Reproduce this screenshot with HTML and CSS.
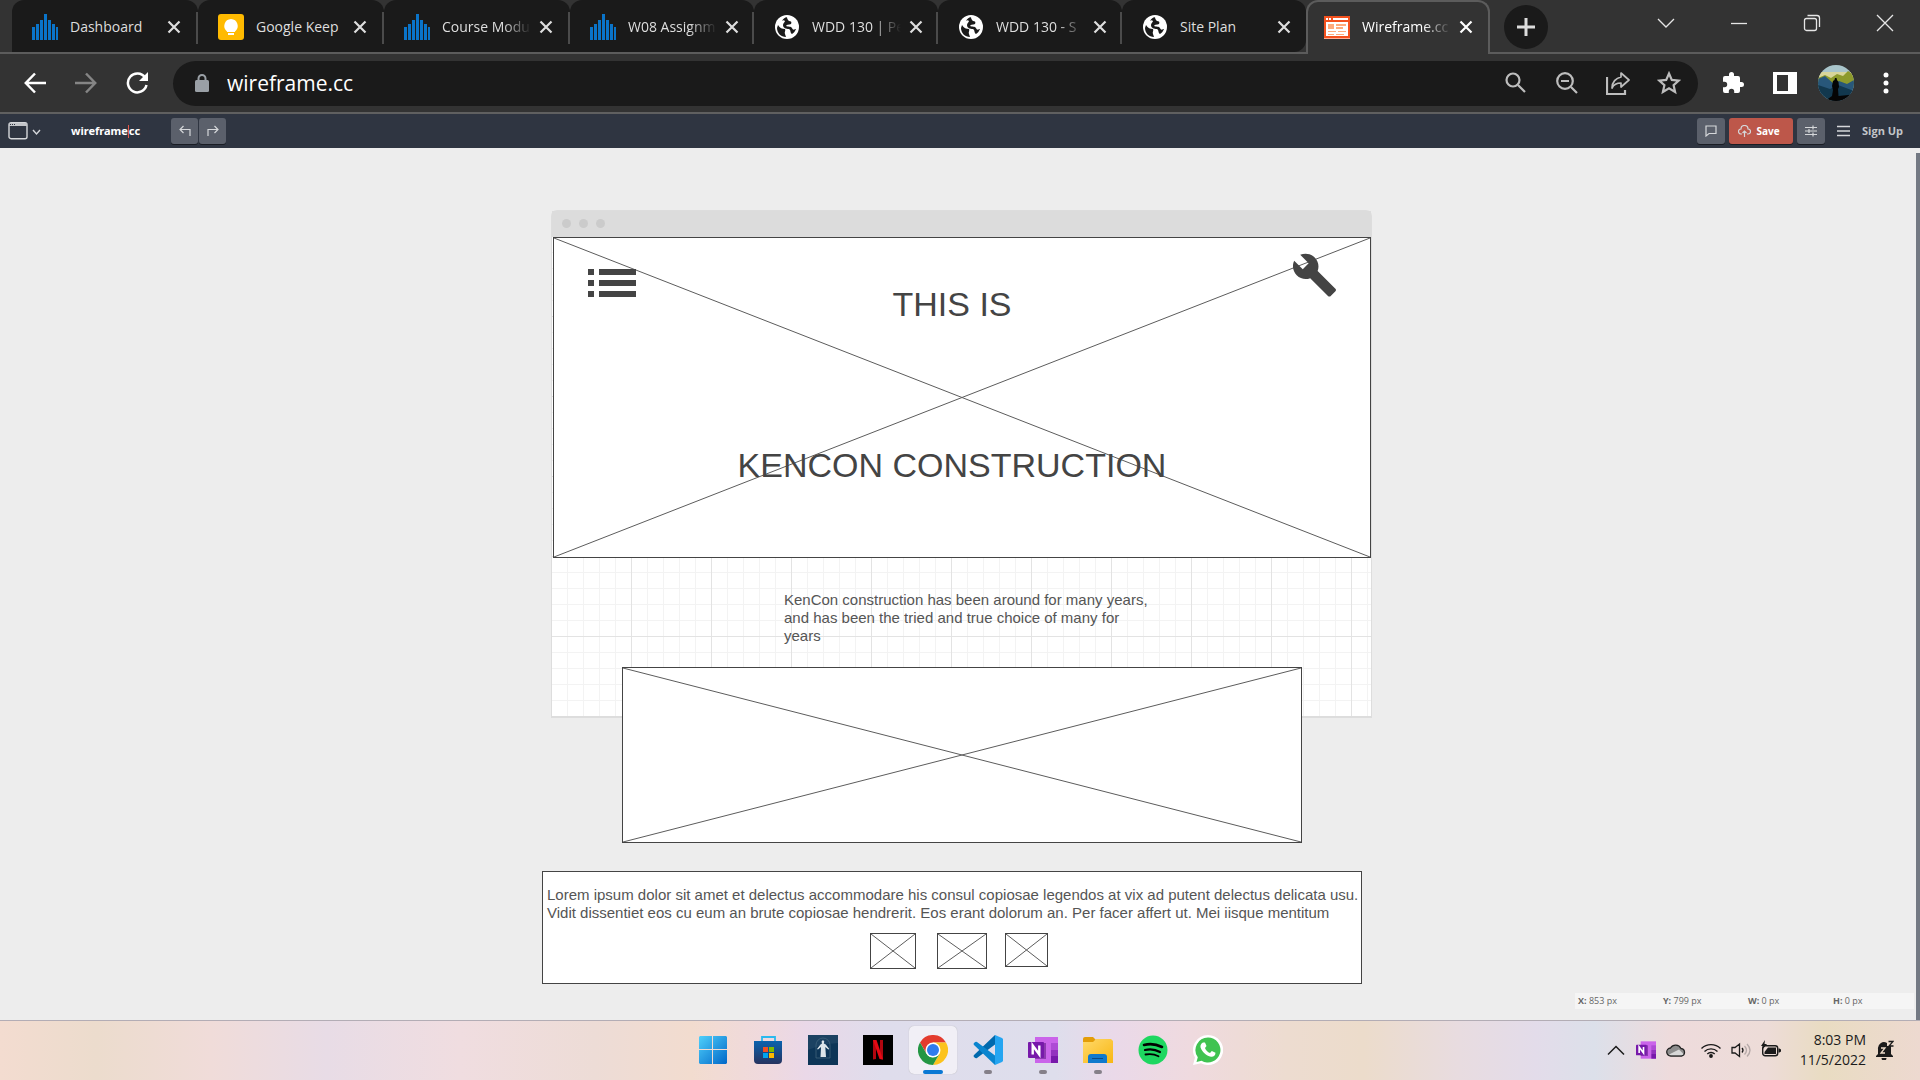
FILE: index.html
```html
<!DOCTYPE html>
<html lang="en">
<head>
<meta charset="utf-8">
<title>Wireframe.cc</title>
<link rel="stylesheet" href="styles.css">
</head>
<body>
<svg class="defs" width="0" height="0" aria-hidden="true">
  <symbol id="bars" viewBox="0 0 26 26"><path fill="#0a74c9" d="M0 13h3v13H0zM4 10h3v16H4zM8 6h3v20H8zM12 0h3v26h-3zM16 6h3v20h-3zM20 10h3v16h-3zM24 13h2v13h-2z"/></symbol>
  <symbol id="globe" viewBox="0 0 26 26"><circle cx="13" cy="13" r="12" fill="#fff"/><path fill="#1a1a1a" d="M4 11c2 3 4 4 7 4 1 2-1 3 0 5l1 3c-5 0-9-4-9-9zM12 3c2 1 1 3 3 4 2 0 3 1 2 3-2 1-4 0-5 2 2 1 5 0 6 2 1 3 3 1 4 1-1 2-2 4-4 5-2-1-1-4-3-5-3 0-6-1-6-4 0-2 2-3 2-4-1-1-2-1-3 0 1-2 3-4 6-4z"/></symbol>
  <symbol id="cross" viewBox="0 0 14 14"><path d="M1.500 1.500l11 11M12.500 1.500l-11 11" fill="none" stroke="currentColor" stroke-width="2.200"/></symbol>
  <symbol id="onenote" viewBox="0 0 30 30"><path fill="#ca64ea" d="M7 2h23v26H7z"/><path fill="#ae4bd5" d="M23 8h7v7h-7z"/><path fill="#9332bf" d="M23 15h7v6h-7z"/><path fill="#7719aa" d="M23 21h7v7h-7z"/><path fill="#501075" opacity=".5" d="M7 8h11v16H7z"/><rect y="7" width="16" height="16" rx="1" fill="#7719aa"/><path fill="none" stroke="#fff" stroke-width="2.400" d="M4.700 19.500v-9l6.600 9v-9"/></symbol>
</svg>

<header class="browser">
  <div class="strip">
    <nav class="tabs" aria-label="Tabs">
      <div class="tab wide"><svg class="fav"><use href="#bars"/></svg><a href="#" class="title">Dashboard</a><button class="close" aria-label="Close tab"><svg><use href="#cross"/></svg></button></div>
      <div class="tab wide"><svg class="fav" viewBox="0 0 26 26"><rect width="26" height="26" rx="3" fill="#ffba00"/><path fill="#fff" d="M13 5a7 7 0 0 1 4 12.500V18H9v-.500A7 7 0 0 1 13 5zM10 19h6v2h-6z"/></svg><a href="#" class="title">Google Keep</a><button class="close" aria-label="Close tab"><svg><use href="#cross"/></svg></button></div>
      <div class="tab wide"><svg class="fav"><use href="#bars"/></svg><a href="#" class="title fade">Course Modu</a><button class="close" aria-label="Close tab"><svg><use href="#cross"/></svg></button></div>
      <div class="tab"><svg class="fav"><use href="#bars"/></svg><a href="#" class="title fade">W08 Assignm</a><button class="close" aria-label="Close tab"><svg><use href="#cross"/></svg></button></div>
      <div class="tab"><svg class="fav"><use href="#globe"/></svg><a href="#" class="title fade">WDD 130 | Pe</a><button class="close" aria-label="Close tab"><svg><use href="#cross"/></svg></button></div>
      <div class="tab"><svg class="fav"><use href="#globe"/></svg><a href="#" class="title fade">WDD 130 - S</a><button class="close" aria-label="Close tab"><svg><use href="#cross"/></svg></button></div>
      <div class="tab"><svg class="fav"><use href="#globe"/></svg><a href="#" class="title">Site Plan</a><button class="close" aria-label="Close tab"><svg><use href="#cross"/></svg></button></div>
      <div class="tab active"><svg class="fav" viewBox="0 0 26 26"><path fill="#f4511e" d="M0 2h26v22H0z"/><path fill="#ffab91" d="M0 24h26v1H0z"/><path fill="#fff" d="M2 4h2v2H2zM5 4h2v2H5zM9 4h15v2H9zM2 8h22v14H2z"/><path fill="#ffab7c" d="M4 10h6v5H4zM12 10h10v2H12zM12 13h7v2h-7zM4 17h8v1H4zM14 17h8v1h-8zM4 20h6v1H4zM12 20h8v1h-8z"/></svg><a href="#" class="title fade">Wireframe.cc</a><button class="close" aria-label="Close tab"><svg><use href="#cross"/></svg></button></div>
    </nav>
    <button class="newtab" aria-label="New tab"><svg width="18" height="18" viewBox="0 0 18 18"><path d="M9 0v18M0 9h18" stroke="#dcdcdc" stroke-width="3"/></svg></button>
    <div class="winctl">
      <button aria-label="Search tabs"><svg width="18" height="18" viewBox="0 0 18 18"><path d="M1 5l8 8 8-8"/></svg></button>
      <button aria-label="Minimize"><svg width="18" height="18" viewBox="0 0 18 18"><path d="M1 9.500h16"/></svg></button>
      <button aria-label="Restore"><svg width="18" height="18" viewBox="0 0 18 18"><rect x="1.500" y="4.500" width="12" height="12" rx="2"/><path d="M4.500 1.500H14a2.500 2.500 0 0 1 2.500 2.500v9"/></svg></button>
      <button aria-label="Close"><svg width="18" height="18" viewBox="0 0 18 18"><path d="M1 1l16 16M17 1L1 17"/></svg></button>
    </div>
  </div>
  <div class="toolbar">
    <div class="navs">
      <button aria-label="Back"><svg width="22" height="22" viewBox="0 0 22 22" fill="none" stroke="#fff" stroke-width="2.500"><path d="M22 11H2M11 1.500L1.800 11l9.200 9.500"/></svg></button>
      <button aria-label="Forward"><svg width="22" height="22" viewBox="0 0 22 22" fill="none" stroke="#858585" stroke-width="2.500"><path d="M0 11h20M11 1.500l9.200 9.500-9.200 9.500"/></svg></button>
      <button aria-label="Reload"><svg width="22" height="22" viewBox="0 0 22 22" fill="none" stroke="#fff" stroke-width="2.500"><path d="M19 5.500A9.400 9.400 0 1 0 20.500 13"/><path fill="#fff" stroke="none" d="M22 0v9h-9z"/></svg></button>
    </div>
    <div class="omnibox">
      <svg width="14" height="18" viewBox="0 0 14 18"><rect y="6" width="14" height="12" rx="1.500" fill="#9aa0a6"/><path d="M3.500 7V4.500a3.500 3.500 0 0 1 7 0V7" fill="none" stroke="#9aa0a6" stroke-width="2"/></svg>
      <input type="text" value="wireframe.cc" aria-label="Address">
      <button aria-label="Search page"><svg width="24" height="24" viewBox="0 0 24 24"><circle cx="9" cy="9" r="6.500"/><path d="M14 14l7 7"/></svg></button>
      <button aria-label="Zoom"><svg width="24" height="24" viewBox="0 0 24 24"><circle cx="10" cy="10" r="7.800"/><path d="M16 16l6 6M6 10h8"/></svg></button>
      <button aria-label="Share"><svg width="24" height="24" viewBox="0 0 24 24"><path d="M1 6v17h18v-4" /><path stroke-width="1.700" stroke-linejoin="round" d="M15 2l8 7-8 7v-4c-4 0-7 1-9 5 0-6 4-10 9-11z"/></svg></button>
      <button aria-label="Bookmark"><svg width="24" height="24" viewBox="0 0 24 24"><path d="M12 2.500l2.800 6.400 7 .700-5.200 4.600 1.500 6.800-6.100-3.600L5.900 21l1.500-6.800-5.200-4.600 7-.700z"/></svg></button>
    </div>
    <div class="exts">
      <button aria-label="Extensions"><svg width="24" height="24" viewBox="0 0 24 24" fill="#fff"><path d="M20.500 11H19V7a2 2 0 0 0-2-2h-4V3.500a2.500 2.500 0 0 0-5 0V5H4a2 2 0 0 0-2 2v3.800h1.500a2.700 2.700 0 0 1 0 5.400H2V20a2 2 0 0 0 2 2h3.800v-1.500a2.700 2.700 0 0 1 5.400 0V22H17a2 2 0 0 0 2-2v-4h1.500a2.500 2.500 0 0 0 0-5z"/></svg></button>
      <button aria-label="Side panel"><svg width="24" height="24" viewBox="0 0 24 24"><path fill="#fff" fill-rule="evenodd" d="M0 1h24v22H0zM4 4v16h11V4z"/></svg></button>
      <button aria-label="Profile"><svg width="36" height="36" viewBox="0 0 36 36"><defs><clipPath id="av"><circle cx="18" cy="18" r="18"/></clipPath></defs><g clip-path="url(#av)"><path fill="#a9c5cb" d="M0 0h36v36H0z"/><path fill="#d8d59a" d="M0 7h36v6H0z"/><path fill="#8d9a2c" d="M0 13l7-3 6 3 6-4 6 2 5-5 6 4v12H0z"/><path fill="#28577a" d="M0 14l7-3 9 8 5-3 8 3 7-4v14H0z"/><path fill="#12384e" d="M0 20l12 4 8-4 16 6v10H0z"/><path fill="#050505" d="M7 36l7-5 1-6-1-4 1-5 1.500-1 .500-2h1.500l.500 2 1.500 2 .500 5-1 2 .500 7 10-1 5-2v8z"/></g></svg></button>
      <button aria-label="Menu"><svg width="6" height="22" viewBox="0 0 6 22" fill="#fff"><circle cx="3" cy="3" r="2.500"/><circle cx="3" cy="11" r="2.500"/><circle cx="3" cy="19" r="2.500"/></svg></button>
    </div>
  </div>
</header>

<div class="appbar">
  <button class="device" aria-label="Template"><svg width="34" height="18" viewBox="0 0 34 18" fill="none" stroke="#c3c5c9"><rect x="1" y=".700" width="18" height="16" rx="2" stroke-width="1.400"/><path fill="#c3c5c9" stroke="none" d="M1 1h18v3H1z"/><path stroke="#2f3541" stroke-dasharray="1 1" d="M2 2.500h5"/><path stroke-width="1.400" d="M25 8l3.500 4L32 8"/></svg></button>
  <a href="#" class="brand">wireframe<i></i>cc</a>
  <div class="history">
    <button aria-label="Undo"><svg width="12" height="12" viewBox="0 0 12 12"><path d="M4.500 1L1 4.500 4.500 8M1 4.500h10V11"/></svg></button>
    <button aria-label="Redo"><svg width="12" height="12" viewBox="0 0 12 12"><path d="M7.500 1L11 4.500 7.500 8M11 4.500H1V11"/></svg></button>
  </div>
  <div class="actions">
    <button aria-label="Comments"><svg width="12" height="12" viewBox="0 0 12 12"><path d="M1 1h10v7.500H4L1 11z"/></svg></button>
    <button class="save"><svg width="13" height="12" viewBox="0 0 13 12"><path d="M4 9H3a2.500 2.500 0 0 1 0-5 3.500 3.500 0 0 1 7 0 2.500 2.500 0 0 1 0 5H9M6.500 12V6M4.500 8l2-2 2 2"/></svg>Save</button>
    <button aria-label="Settings"><svg width="12" height="12" viewBox="0 0 12 12"><path d="M0 2.500h12M0 6h12M0 9.500h12M8 .500v4M4 4v4M8 7.500v4"/></svg></button>
    <button class="burger" aria-label="Menu"><svg width="13" height="12" viewBox="0 0 13 12"><path d="M0 1.500h13M0 6h13M0 10.500h13" stroke-width="1.600"/></svg></button>
    <a href="#" class="signup">Sign Up</a>
  </div>
</div>

<main class="workspace">
  <div class="stage">
    <div class="frame">
      <div class="framebar"><i></i><i></i><i></i></div>
      <div class="grid"></div>
    </div>
    <div class="node hero"><svg><line x1="0" y1="0" x2="100%" y2="100%"/><line x1="0" y1="100%" x2="100%" y2="0"/></svg></div>
    <svg class="node listicon" viewBox="0 0 48 28" fill="#444"><path d="M0 0h6v6H0zM11 0h37v6H11zM0 11h6v6H0zM11 11h37v6H11zM0 22h6v6H0zM11 22h37v6H11z"/></svg>
    <svg class="node wrench" viewBox="1 1 22 22"><path fill="#444" d="M22.700 19l-9.100-9.100c.900-2.300.400-5-1.500-6.900-2-2-5-2.400-7.400-1.300L9 6 6 9 1.600 4.700C.400 7.100.900 10.100 2.900 12.100c1.900 1.900 4.600 2.400 6.900 1.500l9.100 9.100c.400.400 1 .400 1.400 0l2.300-2.300c.500-.400.500-1.100.100-1.400z"/></svg>
    <h1 class="node head one">THIS IS</h1>
    <h1 class="node head two">KENCON CONSTRUCTION</h1>
    <p class="node copy intro">KenCon construction has been around for many years, and has been the tried and true choice of many for years</p>
    <div class="node banner"><svg><line x1="0" y1="0" x2="100%" y2="100%"/><line x1="0" y1="100%" x2="100%" y2="0"/></svg></div>
    <div class="node footer">
      <p class="copy">Lorem ipsum dolor sit amet et delectus accommodare his consul copiosae legendos at vix ad putent delectus delicata usu.<br>Vidit dissentiet eos cu eum an brute copiosae hendrerit. Eos erant dolorum an. Per facer affert ut. Mei iisque mentitum</p>
    </div>
    <div class="node thumb t1"><svg><line x1="0" y1="0" x2="100%" y2="100%"/><line x1="0" y1="100%" x2="100%" y2="0"/></svg></div>
    <div class="node thumb t2"><svg><line x1="0" y1="0" x2="100%" y2="100%"/><line x1="0" y1="100%" x2="100%" y2="0"/></svg></div>
    <div class="node thumb t3"><svg><line x1="0" y1="0" x2="100%" y2="100%"/><line x1="0" y1="100%" x2="100%" y2="0"/></svg></div>
  </div>
  <div class="coords"><span><b>X:</b> 853 px</span><span><b>Y:</b> 799 px</span><span><b>W:</b> 0 px</span><span><b>H:</b> 0 px</span></div>
  <div class="scroll"></div>
</main>

<footer class="taskbar">
  <div class="apps">
    <button aria-label="Start"><svg viewBox="0 0 30 30"><defs><linearGradient id="w" x1="0" y1="0" x2="1" y2="1"><stop stop-color="#4fd0fb"/><stop offset="1" stop-color="#0067c8"/></linearGradient></defs><path fill="url(#w)" d="M2 1h12v13H1V2zM15 1h13l1 1v12H15zM1 15h13v14H2l-1-1zM15 15h14v13l-1 1H15z"/></svg></button>
    <button aria-label="Store"><svg viewBox="0 0 30 30"><defs><linearGradient id="st" x1="0" y1="0" x2="0" y2="1"><stop stop-color="#0a62ae"/><stop offset="1" stop-color="#26335f"/></linearGradient></defs><path fill="none" stroke="#2bb9ee" stroke-width="1.800" d="M9 7V2h13v5"/><path fill="url(#st)" d="M1 6h28v19a4 4 0 0 1-4 4H5a4 4 0 0 1-4-4z"/><path fill="#f25022" d="M10 12h5v5h-5z"/><path fill="#7fba00" d="M16 12h5v5h-5z"/><path fill="#00a4ef" d="M10 18h5v5h-5z"/><path fill="#ffb900" d="M16 18h5v5h-5z"/></svg></button>
    <button aria-label="Library"><svg viewBox="0 0 30 30"><path fill="#0d3557" d="M0 0h30v30H0z"/><path fill="#1c4262" d="M0 0h30v8Q14 9 0 15z"/><path fill="none" stroke="#45677f" stroke-width=".700" d="M8 23V10a7 7 0 0 1 14 0v13z"/><path fill="#dde5ea" d="M15 5l1.300 1.500-.500 2 2 1 3.500 4.500-1 .500-3-2.500.700 10h-5.500l.500-10-3 2.500-1-.500 3.500-4.500 1.500-1-.500-2z"/></svg></button>
    <button aria-label="Netflix"><svg viewBox="0 0 30 30"><path d="M0 0h30v30H0z"/><path fill="#b1060f" d="M10 5h3v19l-3 .500zM17 5h3v19.500l-3-.500z"/><path fill="#e50914" d="M10 5h3.500L20 24.500l-3.500-.500z"/></svg></button>
    <button class="current" aria-label="Chrome"><svg viewBox="0 0 30 30"><path fill="#e33b2e" d="M2 7.500a15 15 0 0 1 26 0H15l-6.500 11z"/><path fill="#fcc31d" d="M28 7.500A15 15 0 0 1 15 30l6.500-11.300L15 7.500z"/><path fill="#249644" d="M2 7.500L8.500 18.700c3 4.500 8 5 13 0L15 30A15 15 0 0 1 2 7.500z"/><circle cx="15" cy="15" r="7.500" fill="#fff"/><circle cx="15" cy="15" r="6" fill="#2f7bee"/></svg></button>
    <button class="open" aria-label="VS Code"><svg viewBox="0 0 30 30"><path fill="#0069ad" d="M1 20l21-20 2 8L4 23q-1 1-3-1-1-1 0-2z"/><path fill="#0a85cf" d="M1 10l21 20 2-8L4 7q-1-1-3 1-1 1 0 2z"/><path fill="#25a5f1" d="M22 0l7 3 1 1v22l-1 1-7 3z"/></svg></button>
    <button class="open" aria-label="OneNote"><svg><use href="#onenote"/></svg></button>
    <button class="open" aria-label="Explorer"><svg viewBox="0 0 30 30"><defs><linearGradient id="fo" x1="0" y1="0" x2="1" y2="1"><stop stop-color="#ffd96a"/><stop offset="1" stop-color="#f8b714"/></linearGradient></defs><path fill="#e39d08" d="M0 4a2 2 0 0 1 2-2h8l3 3-2 3H0z"/><path fill="url(#fo)" d="M0 7h10l3-3h15l2 2v22H0z"/><path fill="#0f79cd" d="M5 28v-6a3 3 0 0 1 3-3h13a3 3 0 0 1 3 3v6z"/><path stroke="#0b4a85" d="M9 23.500h11"/></svg></button>
    <button aria-label="Spotify"><svg viewBox="0 0 30 30"><circle cx="15" cy="15" r="14.500" fill="#1ed760"/><path fill="none" stroke="#000" stroke-linecap="round" stroke-width="2.600" d="M6 10q9-2.500 18 2"/><path fill="none" stroke="#000" stroke-linecap="round" stroke-width="2.200" d="M7 15q8-2 15 2"/><path fill="none" stroke="#000" stroke-linecap="round" stroke-width="1.800" d="M7.500 19.500q7-1.500 13 1.800"/></svg></button>
    <button aria-label="WhatsApp"><svg viewBox="0 0 30 30"><path fill="#fff" d="M15 0a15 15 0 1 1-7 28.200L0 30l2-7.500A15 15 0 0 1 15 0z"/><path fill="#40c351" d="M15 2.500a12.500 12.500 0 1 1-6.500 23.200L3.500 27l1.300-4.800A12.500 12.500 0 0 1 15 2.500z"/><path fill="#fff" d="M10 7.500h2l1.500 3.500-1.500 2c1 2.500 2.500 4 5 5l1.800-2 3.700 1.800c0 3-2 4.200-4.500 4-5-1-9-5-10.500-9.500-.300-2 .700-4 2.500-4.800z"/></svg></button>
  </div>
  <div class="tray">
    <svg width="20" height="20" viewBox="0 0 20 20" fill="none" stroke="#1b1b1b" stroke-width="1.500"><path d="M2 14.500l8-8 8 8"/></svg>
    <svg width="20" height="20"><use href="#onenote"/></svg>
    <svg width="20" height="20" viewBox="0 0 20 20"><path fill="#8d8d8d" stroke="#222" stroke-width="1.300" d="M5 16a4 4 0 0 1-.500-8A6 6 0 0 1 15 8.500 3.800 3.800 0 0 1 15.500 16z"/><path fill="#d8d8d8" d="M3 14.500l10-5 4.500 4.500q-1 1.300-2 1.300H5q-1 0-2-.800z"/></svg>
    <svg class="wifi" width="20" height="20" viewBox="0 0 20 20" fill="none" stroke="#1b1b1b" stroke-width="1.400"><path d="M.500 8.500a13.500 13.500 0 0 1 19 0M3.500 11.500a9.300 9.300 0 0 1 13 0M6.300 14a5.300 5.300 0 0 1 7.400 0"/><circle cx="10" cy="16" r="1.200" fill="#1b1b1b"/></svg>
    <svg width="20" height="20" viewBox="0 0 20 20" fill="none" stroke="#1b1b1b" stroke-width="1.300"><path d="M1 7.500h3L8.500 4v12.500L4 13H1zM11 8q2 2.300 0 4.500"/><path stroke="#b5a9a8" d="M13.500 6q4 4.200 0 8.500M16 4q6 6.200 0 12.500"/></svg>
    <svg width="20" height="20" viewBox="0 0 20 20"><rect x="1.700" y="5.700" width="15" height="10" rx="2.500" fill="none" stroke="#1b1b1b" stroke-width="1.400"/><path fill="#1b1b1b" d="M7 7.500h8v6.500H3.500V12zM17.500 8.500h1l1.500 1v2l-1.500 1h-1zM4 0L0 6h2.500L1 10l5-6H3.500z"/></svg>
    <div class="clock"><span>8:03 PM</span><span>11/5/2022</span></div>
    <svg width="18" height="20" viewBox="0 0 18 20"><path fill="#1b1b1b" d="M2 9a6 6 0 0 1 9-6v3h4v8l2 2v1H0v-1l2-2zM5.500 18h5a2.500 2.500 0 0 1-5 0z"/><path fill="none" stroke="#eddcca" stroke-width="1.300" d="M5 8h4l-4 5h4"/><path fill="none" stroke="#1b1b1b" stroke-width="1.300" d="M12.500 1.500H17L13 6h4.500"/></svg>
  </div>
</footer>
</body>
</html>
```

FILE: styles.css
```css
* { box-sizing: border-box; }
body {
  margin: 0;
  min-height: 100vh;
  display: flex;
  flex-direction: column;
  background: #ededed;
  font-family: "Open Sans", "Noto Sans", sans-serif;
  font-size: 14px;
}
button {
  border: 0;
  padding: 0;
  background: none;
  font: inherit;
  color: inherit;
  display: flex;
  align-items: center;
  justify-content: center;
}
a { color: inherit; text-decoration: none; }
.defs { position: absolute; }

/* Browser chrome */
.browser { background: #333; color: #dedede; border-bottom: 2px solid #606060; }
.strip { display: flex; height: 54px; padding-left: 12px; box-shadow: inset 0 -2px #5c5c5c; }
.tabs { display: flex; flex: 0 1 1478px; min-width: 0; }
.tab {
  flex: 0 1 184px;
  min-width: 0;
  height: 52px;
  display: flex;
  align-items: center;
  padding: 2px 15px 0 20px;
  background: linear-gradient(#4b4b4b, #4b4b4b) right 12px / 2px 32px no-repeat #1a1a1a;
  border-radius: 12px 12px 0 0;
}
.tab.wide { flex-basis: 186px; padding-right: 17px; }
.tab:nth-child(7) { background-image: none; border-bottom-right-radius: 12px; }
.tab.active {
  height: 54px;
  background: #333;
  border: 2px solid #5c5c5c;
  border-bottom: 0;
  padding: 0 15px 2px 16px;
  color: #fff;
}
.fav { width: 26px; height: 26px; flex: none; }
.title {
  flex: 1;
  min-width: 0;
  margin: 0 8px 0 12px;
  white-space: nowrap;
  line-height: 20px;
}
.fade { mask-image: linear-gradient(to left, transparent, #000 28px); }
.close, .close svg { width: 14px; height: 14px; flex: none; }
.newtab { width: 44px; height: 44px; margin: 5px 0 0 14px; border-radius: 50%; background: #1a1a1a; flex: none; }
.winctl { margin-left: auto; display: flex; gap: 55px; padding: 0 26px 8px 0; }
.winctl svg { fill: none; stroke: #e6e6e6; stroke-width: 1.3; }
.toolbar { display: flex; align-items: center; height: 58px; padding: 0 31px 0 24px; }
.navs { display: flex; gap: 29px; margin-right: 25px; }
.omnibox {
  flex: 1;
  height: 45px;
  display: flex;
  align-items: center;
  gap: 27px;
  padding: 0 17px 0 22px;
  border-radius: 23px;
  background: #1a1a1a;
}
.omnibox input {
  flex: 1;
  min-width: 0;
  height: 32px;
  padding: 0;
  margin-left: -9px;
  border: 0;
  outline: 0;
  background: none;
  color: #fff;
  font: 21px "Open Sans", "Noto Sans", sans-serif;
}
.omnibox button svg { fill: none; stroke: #bdbdbd; stroke-width: 2.2; }
.exts { display: flex; align-items: center; gap: 28px; margin-left: 23px; }
.exts button:nth-child(3) { margin: 0 -7px; }
.exts button:last-child { margin-left: 8px; }

/* Editor bar */
.appbar { display: flex; align-items: center; height: 34px; padding: 0 17px 0 8px; background: #2f3541; }
.device { width: 34px; }
.brand {
  display: flex;
  align-items: center;
  width: 100px;
  margin-left: 29px;
  color: #fff;
  font: 700 11px/16px "Noto Sans", sans-serif;
}
.brand i { width: 1px; height: 13px; background: #e2574c; }
.history, .actions { display: flex; align-items: center; gap: 1px; }
.history button, .actions button {
  width: 27px;
  height: 26px;
  background: #5b606b;
  border-radius: 3px;
  box-shadow: 0 1px #1a1d24;
}
.appbar svg { fill: none; stroke: #d5d7da; stroke-width: 1.2; }
.actions { margin-left: auto; gap: 4px; color: #c3c5c9; font-weight: 700; font-size: 11px; line-height: 16px; }
.actions button { width: 28px; }
.actions .save { width: 64px; gap: 5px; padding-right: 4px; background: #bd574a; color: #fff; font-size: 10px; }
.actions .burger { width: 13px; margin: 0 8px; background: none; box-shadow: none; }

/* Drawing area */
.workspace { flex: 1 0 auto; position: relative; padding: 62px 0 36px 4px; }
.stage { position: relative; width: 822px; height: 774px; margin: 0 auto; }
.frame { width: 821px; height: 508px; border: 1px solid #ddd; border-bottom: 2px solid #ddd; border-radius: 6px 6px 0 0; background: #fff; }
.framebar { display: flex; align-items: center; gap: 8px; height: 26px; padding: 0 0 2px 10px; background: #dcdcdc; }
.framebar i { width: 9px; height: 9px; border-radius: 50%; background: #cbcbcb; }
.grid {
  height: 479px;
  background:
    linear-gradient(to left, #e3e3e3 1px, transparent 1px) 0 0 / 80px 80px,
    linear-gradient(to top, #e3e3e3 1px, transparent 1px) 0 0 / 80px 80px,
    linear-gradient(to left, #f3f3f3 1px, transparent 1px) 0 0 / 16px 16px,
    linear-gradient(to top, #f3f3f3 1px, transparent 1px) 0 0 / 16px 16px;
}
.node { position: absolute; margin: 0; }
.hero, .banner, .footer, .thumb { background: #fff; border: 1px solid #444; }
.node > svg { display: block; width: 100%; height: 100%; stroke: #5c5c5c; stroke-width: 1; }
.hero { left: 2px; top: 27px; width: 818px; height: 321px; }
.listicon { left: 37px; top: 59px; width: 48px; height: 28px; }
.wrench { left: 742px; top: 43px; width: 43px; height: 44px; }
.head { left: 0; width: 802px; text-align: center; font: 34px/40px "Liberation Sans", Arial, sans-serif; color: #444; }
.one { top: 74px; }
.two { top: 235px; }
.copy { margin: 0; font: 15px/18px "Liberation Sans", Arial, sans-serif; color: #555; }
.intro { left: 233px; top: 381px; width: 366px; }
.banner { left: 71px; top: 457px; width: 680px; height: 176px; }
.footer { left: -9px; top: 661px; width: 820px; height: 113px; padding: 14px 0 14px 4px; }
.footer .copy { white-space: nowrap; }
.thumb { top: 723px; height: 36px; }
.t1 { left: 319px; width: 46px; }
.t2 { left: 386px; width: 50px; }
.t3 { left: 454px; width: 43px; height: 34px; }
.coords {
  position: absolute;
  right: 6px;
  bottom: 11px;
  width: 339px;
  display: grid;
  grid-template-columns: 85px 85px 85px 1fr;
  padding-left: 3px;
  background: #f5f5f5;
  color: #666;
  font-size: 9px;
  line-height: 16px;
}
.scroll { position: absolute; right: 0; top: 5px; bottom: 0; width: 4px; background: #737983; }

/* Taskbar */
.taskbar {
  position: relative;
  display: flex;
  align-items: center;
  justify-content: flex-end;
  height: 60px;
  padding-bottom: 2px;
  border-top: 1px solid #b3adb5;
  background: linear-gradient(90deg, #f3dcd0, #ecdccd 5%, #f0dcd9 11%, #e8dce6 17%, #f0dde0 24%, #eddcd6 31%, #f2dccf 36%, #efd9de 40%, #ead8e8 42%, #dfddec 46%, #dedeec 55%, #ead9e9 58%, #efdadf 62%, #eddcd0 67%, #ecdccb 71%, #e8dce0 76%, #e3dcea 80%, #dce0ea 83%, #eedbdc 87%, #eddcd8 92%, #e9dcc2 95%, #edd9d0);
}
.apps { position: absolute; left: 1px; right: 0; top: 0; bottom: 2px; display: flex; justify-content: center; align-items: center; gap: 7px; pointer-events: none; }
.apps button { position: relative; width: 48px; height: 48px; border-radius: 5px; }
.apps svg { width: 30px; height: 30px; }
.apps .current { background: #f1eff6; box-shadow: 0 0 1px #aaa; }
.apps .current::after, .apps .open::after {
  content: "";
  position: absolute;
  bottom: 0;
  width: 8px;
  height: 4px;
  border-radius: 2px;
  background: #858089;
}
.apps .current::after { width: 20px; background: #0a78d4; }
.tray { display: flex; align-items: center; gap: 10px; padding-right: 26px; color: #1b1b1b; }
.wifi { margin-left: 5px; }
.clock { display: flex; flex-direction: column; align-items: flex-end; width: 75px; line-height: 20px; }
```
